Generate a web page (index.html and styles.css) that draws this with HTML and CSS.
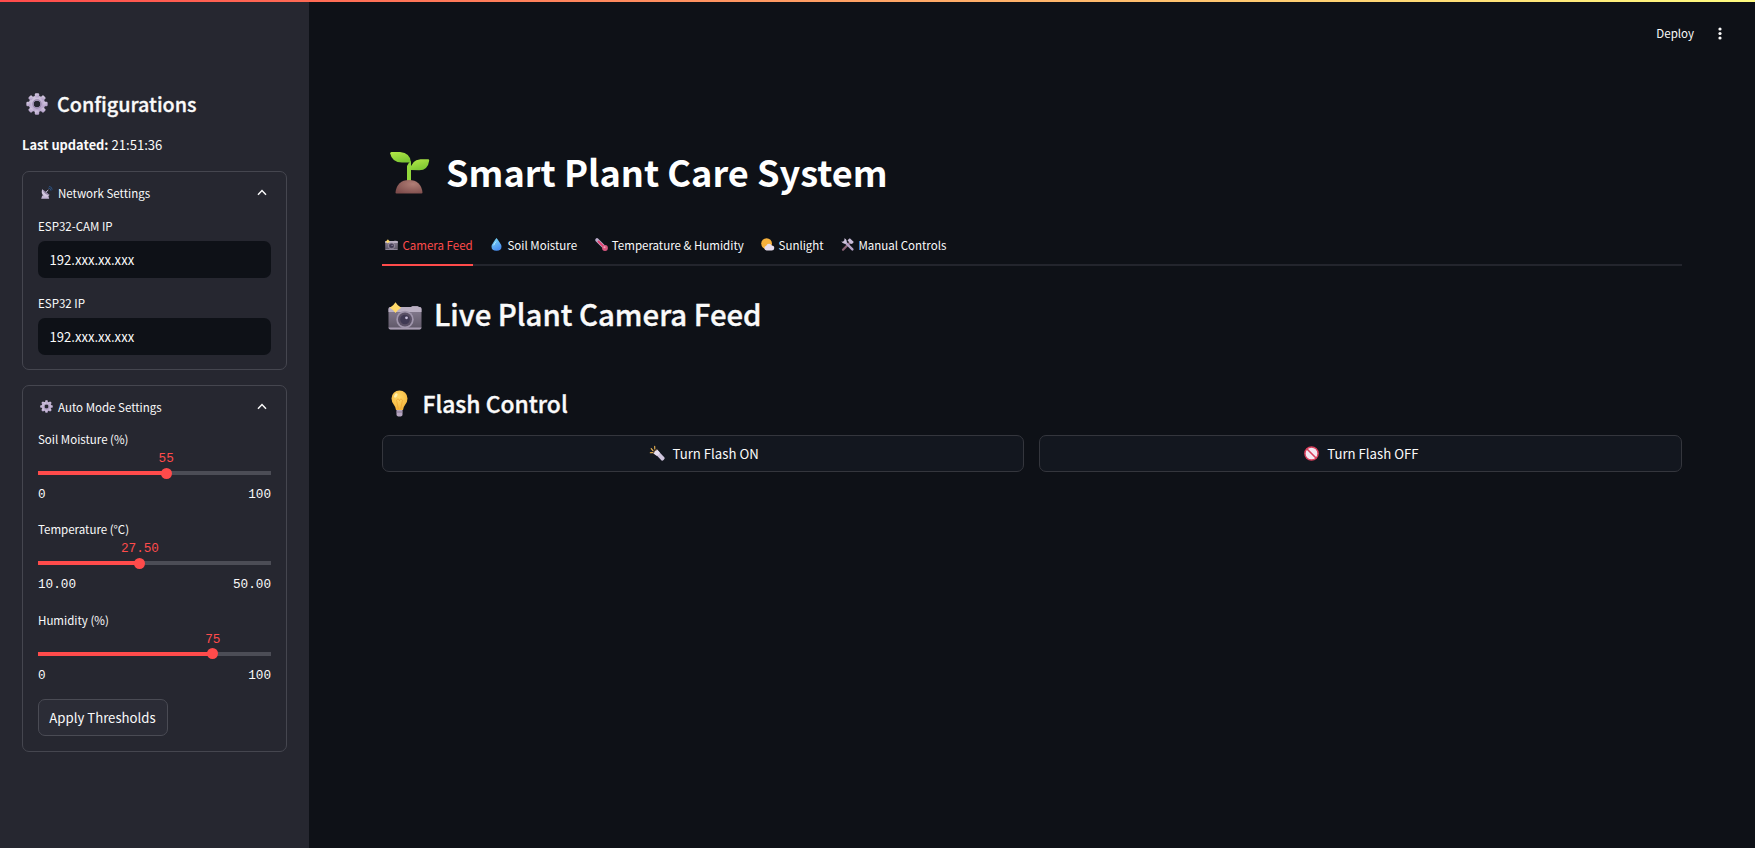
FILE: index.html
```html
<!DOCTYPE html>
<html lang="en">
<head>
<meta charset="utf-8">
<title>Smart Plant Care System</title>
<link rel="stylesheet" href="styles.css">
</head>
<body>
<svg class="defs" aria-hidden="true">
  <defs>
    <linearGradient id="metal" x1="0" y1="0" x2="0.6" y2="1"><stop offset="0" stop-color="#d8cfe4"/><stop offset="1" stop-color="#b3a0c8"/></linearGradient>
    <linearGradient id="leaf" x1="0" y1="0" x2="0.5" y2="1"><stop offset="0" stop-color="#b5e948"/><stop offset="1" stop-color="#7cc733"/></linearGradient>
    <radialGradient id="soil" cx="0.65" cy="0.3" r="0.8"><stop offset="0" stop-color="#b07e76"/><stop offset="1" stop-color="#7d4c4b"/></radialGradient>
    <linearGradient id="body" x1="0" y1="0" x2="0" y2="1"><stop offset="0" stop-color="#8a8094"/><stop offset="1" stop-color="#5d5666"/></linearGradient>
    <radialGradient id="glow" cx="0.45" cy="0.35" r="0.65"><stop offset="0" stop-color="#ffd867"/><stop offset="1" stop-color="#f5b53c"/></radialGradient>
    <linearGradient id="water" x1="0" y1="0" x2="0.4" y2="1"><stop offset="0" stop-color="#7fe0f8"/><stop offset="1" stop-color="#4a8ff0"/></linearGradient>
    <symbol id="gear" viewBox="0 0 24 24">
      <g fill="url(#metal)">
        <path fill-rule="evenodd" d="M12 3a9 9 0 1 0 0 18a9 9 0 0 0 0-18zm0 5.4a3.6 3.6 0 1 1 0 7.200a3.600 3.600 0 0 1 0-7.200z"/>
        <g id="teeth"><rect x="9.600" y="0.400" width="4.800" height="4.500" rx="1.300"/><rect x="9.600" y="19.100" width="4.800" height="4.500" rx="1.300"/><rect x="0.400" y="9.600" width="4.500" height="4.800" rx="1.300"/><rect x="19.100" y="9.600" width="4.500" height="4.800" rx="1.300"/></g>
        <use href="#teeth" transform="rotate(45 12 12)"/>
      </g>
      <circle cx="12" cy="12" r="4.400" fill="none" stroke="#9485a8" stroke-width="1.300"/>
    </symbol>
    <symbol id="camera" viewBox="0 0 34 28">
      <rect x="23" y="4" width="8" height="4" rx="1.500" fill="#aaa0b4"/>
      <rect x="0.500" y="5" width="33" height="22.500" rx="2" fill="url(#body)"/>
      <path d="M0.500 10V7q0-2 2-2h29q2 0 2 2v3z" fill="#b9afc2"/>
      <path d="M0.500 25.500h33q0 2-2 2h-29q-2 0-2-2z" fill="#a79cb1"/>
      <circle cx="17" cy="17.500" r="8.700" fill="#a096ac"/>
      <circle cx="17" cy="17.500" r="7" fill="#5a5166"/>
      <circle cx="17" cy="17.500" r="4.800" fill="#403a54"/>
      <circle cx="18.500" cy="15.800" r="1.400" fill="#c8bfdb"/>
      <path d="M7.500 0.300q2 3.500 5.700 5.400q-3.700 1.900-5.700 5.400q-2-3.500-5.700-5.400q3.700-1.900 5.700-5.400z" fill="#ffd96a"/>
    </symbol>
  </defs>
</svg>

<div class="topline"></div>
<div class="app">
  <aside class="sidebar">
    <h2 class="side-title"><svg class="i-gear-lg"><use href="#gear"/></svg><span>Configurations</span></h2>
    <p class="updated"><strong>Last updated:</strong> <span>21:51:36</span></p>

    <section class="panel panel-net">
      <header class="summary">
        <svg class="i-sm" viewBox="0 0 13 13"><path d="M1.200 12.700l1-3.200h6l1 3.200z" fill="#c2b5d2"/><path d="M2.200 3.300q-1.500 4.200 1.500 6.600q3 2 5.800-.8z" fill="#d2c8df"/><path d="M2.200 3.300l7.300 5.800q-4.500.4-7.300-5.800z" fill="#8d7f9f"/><path d="M6 6.200L8.300 4" stroke="#d2c8df"/><path d="M8.300 2q2.500 0 2.700 2.700M9 .4q3 .2 3.200 3.300" fill="none" stroke="#2b5080" stroke-width="1"/></svg>
        <span>Network Settings</span>
        <svg class="chev" viewBox="0 0 10 7"><path d="M1 5.700L5 1.600L9 5.700"/></svg>
      </header>
      <div class="fields">
        <label class="label">ESP32-CAM IP</label>
        <div class="input">192.xxx.xx.xxx</div>
        <label class="label second">ESP32 IP</label>
        <div class="input">192.xxx.xx.xxx</div>
      </div>
    </section>

    <section class="panel panel-auto">
      <header class="summary">
        <svg class="i-sm"><use href="#gear"/></svg>
        <span>Auto Mode Settings</span>
        <svg class="chev" viewBox="0 0 10 7"><path d="M1 5.700L5 1.600L9 5.700"/></svg>
      </header>
      <div class="sliders">
        <div class="slider" style="--v:55%"><label class="label">Soil Moisture (%)</label><div class="value"><b>55</b></div><div class="track"><i></i></div><div class="range"><span>0</span><span>100</span></div></div>
        <div class="slider" style="--v:43.75%"><label class="label">Temperature (°C)</label><div class="value"><b>27.50</b></div><div class="track"><i></i></div><div class="range"><span>10.00</span><span>50.00</span></div></div>
        <div class="slider" style="--v:75%"><label class="label">Humidity (%)</label><div class="value"><b>75</b></div><div class="track"><i></i></div><div class="range"><span>0</span><span>100</span></div></div>
      </div>
      <button class="btn apply">Apply Thresholds</button>
    </section>
  </aside>

  <main class="main">
    <header class="toolbar"><span>Deploy</span><svg viewBox="0 0 4 13"><circle cx="2" cy="2" r="1.600"/><circle cx="2" cy="6.500" r="1.600"/><circle cx="2" cy="11" r="1.600"/></svg></header>
    <div class="content">
      <h1 class="title">
        <svg viewBox="0 0 40 42"><path d="M17 14q1-3 4-5v20h-4z" fill="#92d83c"/><path d="M0.200 1.500Q0 0 1.500 0H10q10.500 1 11 10.500H12Q2 10.500.2 1.500z" fill="url(#leaf)"/><path d="M20.500 18q.5-10 10-10.800H38q1.400 0 1.200 1.200q-1.200 9.800-10 9.800z" fill="url(#leaf)"/><path d="M5.500 40.500q1.500-12.500 13.500-12.500t13.500 12.500q0 1-1 1h-25q-1 0-1-1z" fill="url(#soil)"/></svg>
        <span>Smart Plant Care System</span>
      </h1>

      <nav class="tabs">
        <a class="tab active"><svg><use href="#camera"/></svg><span>Camera Feed</span></a>
        <a class="tab"><svg viewBox="0 0 13 13"><path d="M6.500 0q1 1.200 2.700 3.800Q11.500 7 11.500 8.500q0 4.300-5 4.300t-5-4.300Q1.500 7 3.800 3.800Q5.500 1.200 6.500 0z" fill="url(#water)"/><path d="M3.700 7.300Q4.500 5 6 3.600" stroke="#b6f0ff" stroke-width="1" fill="none"/></svg><span>Soil Moisture</span></a>
        <a class="tab"><svg viewBox="0 0 13 13"><path d="M2 2L9.800 9.800" stroke="#b9abca" stroke-width="3.600" stroke-linecap="round"/><path d="M3.500 3.500L9.800 9.800" stroke="#e4406f" stroke-width="1.900" stroke-linecap="round"/><circle cx="10" cy="10" r="2.900" fill="#d7567f"/><circle cx="9.500" cy="9.300" r="1" fill="#f6a6b9"/></svg><span>Temperature &amp; Humidity</span></a>
        <a class="tab"><svg viewBox="0 0 13 13"><circle cx="5.600" cy="5.600" r="5.400" fill="#f6b13d"/><path d="M5.500 12.600a2.500 2.500 0 0 1-.3-4.900a3.100 3.100 0 0 1 5.600-.3a2.600 2.600 0 0 1-.3 5.200z" fill="#e6ddee"/></svg><span>Sunlight</span></a>
        <a class="tab"><svg viewBox="0 0 13 13"><path d="M9.600 4L2 11.800" stroke="#8c6377" stroke-width="2.200" stroke-linecap="round"/><path d="M3.600 3.600L11.400 11.400" stroke="#b5a5c8" stroke-width="2.400" stroke-linecap="round"/><path d="M3.300.2Q6.500 1.500 5.500 5Q2.500 6.800.2 3.500l2 .2l1.300-1.300z" fill="#cfc4dc"/><path d="M6.500 2.200L8.800.2l4 3.800l-1.800 2l-1.800-.4z" fill="#c9bcd8"/></svg><span>Manual Controls</span></a>
      </nav>

      <h2 class="heading"><svg><use href="#camera"/></svg><span>Live Plant Camera Feed</span></h2>

      <h3 class="subheading">
        <svg viewBox="0 0 17 27"><path d="M5.500 19h6v5.500q0 2-3 2t-3-2z" fill="#b5a5c0"/><path d="M5.500 21.500h6v1h-6z" fill="#857590"/><path d="M8.500.5a8 8 0 0 1 8 8q0 3.500-2.500 6.500q-1.800 2.200-2 5h-7q-.2-2.800-2-5Q.5 12 .5 8.500a8 8 0 0 1 8-8z" fill="url(#glow)"/><path d="M7.300 19L5.800 11.500a1.500 1.500 0 1 1 2.700-.7a1.500 1.500 0 1 1 2.700.7L9.700 19" fill="none" stroke="#eda02f" stroke-width=".7"/><ellipse cx="4.800" cy="5.500" rx="1.500" ry="2.300" transform="rotate(35 4.800 5.500)" fill="#fff0ac"/></svg>
        <span>Flash Control</span>
      </h3>

      <div class="actions">
        <button class="btn">
          <svg viewBox="0 0 15 15"><path d="M4.200 7.200L7.300 4.200L10 6.800L14.500 11.600q.7.900-.7 2.200t-2.200.7L7 9.800z" fill="#cfc4dc"/><path d="M3.400 7.600q.3-2.800 3.800-4.200l2.700 3.100q-.8 2.500-3.300 3.300z" fill="#e6deee"/><path d="M3.400 7.600q.2-2.900 3.800-4.200" stroke="#8a6b4a" fill="none"/><path d="M3 4.600L1.200 2.600M4.800 3L4.700.4M2.500 6.600L.3 6.700" stroke="#f4bb55" stroke-width="1.100" stroke-linecap="round"/></svg>
          <span>Turn Flash ON</span>
        </button>
        <button class="btn">
          <svg viewBox="0 0 15 15"><circle cx="7.500" cy="7.500" r="6.600" fill="#f3e6f1" stroke="#d9405c" stroke-width="1.500"/><path d="M3 3L12 12" stroke="#d9405c" stroke-width="1.600"/></svg>
          <span>Turn Flash OFF</span>
        </button>
      </div>
    </div>
  </main>
</div>
</body>
</html>
```
FILE: styles.css
```css
* { box-sizing: border-box; }
body {
  margin: 0;
  height: 848px;
  overflow: hidden;
  background: #0e1117;
  color: #fafafa;
  font-family: "Noto Sans CJK JP", "Noto Sans", sans-serif;
  font-size: 11.52px;
}
h1, h2, h3, p { margin: 0; }
svg { display: block; flex: none; overflow: visible; }
.defs { position: absolute; width: 0; height: 0; }
.topline {
  height: 2px;
  background: linear-gradient(90deg, #ff4b4b, #fffd80);
}
.app { display: flex; height: 846px; }

/* Sidebar */
.sidebar {
  width: 309px;
  flex: none;
  padding: 81px 22px 0;
  background: #262730;
}
.side-title {
  display: flex;
  align-items: center;
  gap: 9px;
  height: 40px;
  padding-left: 4px;
  font-size: 19.8px;
  font-weight: 500;
  -webkit-text-stroke: 0.3px #fafafa;
}
.i-gear-lg { width: 22px; height: 22px; margin-top: 2px; }
.updated { margin-top: 12px; line-height: 20px; font-size: 13.1px; }
.updated strong { font-weight: 700; font-size: 12.85px; }
.panel {
  width: 265px;
  border: 1px solid #45464f;
  border-radius: 7px;
  padding: 0 15px;
}
.panel-net { margin-top: 16px; height: 199px; }
.panel-auto { margin-top: 15px; height: 367px; }
.summary {
  display: flex;
  align-items: center;
  height: 41px;
  padding: 0 4px 0 2px;
}
.summary span { margin-left: 5px; flex: 1; }
.i-sm { width: 13px; height: 13px; }
.chev { width: 10px; height: 7px; margin-bottom: 1px; }
.chev path { fill: none; stroke: #fafafa; stroke-width: 1.5; }
.label { display: block; height: 20px; line-height: 20px; }
.fields { padding-top: 3px; }
.input {
  height: 36.5px;
  margin-top: 5px;
  padding-left: 11.5px;
  border-radius: 7px;
  background: #0e1117;
  font-size: 13.1px;
  line-height: 38px;
}
.second { margin-top: 15.5px; }
.sliders { padding-top: 2px; }
.slider { height: 90.4px; }
.value, .range {
  font-family: "Liberation Mono", monospace;
  font-size: 12.7px;
}
.value { height: 18px; line-height: 19px; }
.value b {
  display: block;
  width: max-content;
  margin-left: var(--v);
  transform: translateX(-50%);
  font-weight: 400;
  color: #ff4b4b;
}
.track {
  display: flex;
  align-items: center;
  height: 12px;
  background: linear-gradient(90deg, #ff4b4b var(--v), #4c4d56 var(--v)) center / 100% 4px no-repeat;
}
.track i {
  width: 11px;
  height: 11px;
  margin-left: calc(var(--v) - 5.5px);
  border-radius: 50%;
  background: #ff4b4b;
}
.range {
  display: flex;
  justify-content: space-between;
  height: 20px;
  margin-top: 6px;
  line-height: 20px;
}
.btn {
  display: flex;
  align-items: center;
  justify-content: center;
  height: 37px;
  padding: 0 0 0 2px;
  border: 1px solid #34363d;
  border-radius: 7px;
  background: #13171f;
  color: #fafafa;
  font: inherit;
  font-size: 13.2px;
}
.apply {
  width: 130px;
  margin-top: -1px;
  padding: 0 1px 0 0;
  background: #2b2c36;
  border-color: #4a4b54;
}

/* Main area */
.main { flex: 1; }
.toolbar {
  display: flex;
  align-items: center;
  justify-content: flex-end;
  gap: 24px;
  height: 61px;
  padding-right: 33px;
}
.toolbar svg { width: 4px; height: 13px; fill: #fafafa; margin-top: 1px; }
.content { padding: 76px 73.5px 0 73px; }
.title {
  display: flex;
  align-items: center;
  height: 64px;
  padding-left: 8px;
  font-size: 36.15px;
  font-weight: 700;
  color: #fff;
}
.title svg { width: 40px; height: 42px; margin-top: 3px; }
.title span { margin-left: 16px; }
.tabs {
  display: flex;
  height: 38px;
  margin-top: 25px;
  border-bottom: 2px solid #23252d;
}
.tab {
  display: flex;
  align-items: center;
  height: 38px;
  margin-right: 14.6px;
  padding: 0 0 5px 3px;
}
.tab svg { width: 13px; height: 13px; margin-right: 4.2px; }
.active {
  padding-bottom: 3px;
  border-bottom: 2px solid #ff4b4b;
  color: #ff4b4b;
}
.active svg { margin-right: 4.5px; }
.heading {
  display: flex;
  align-items: center;
  gap: 12px;
  height: 48px;
  margin-top: 23px;
  padding-left: 6px;
  font-size: 29.35px;
  font-weight: 500;
  -webkit-text-stroke: 0.4px #fafafa;
}
.heading svg { width: 34px; height: 28px; margin-top: 6px; }
.subheading {
  display: flex;
  align-items: center;
  height: 40px;
  margin-top: 46px;
  padding-left: 9px;
  font-size: 22.85px;
  font-weight: 500;
  -webkit-text-stroke: 0.35px #fafafa;
}
.subheading svg { width: 17px; height: 27px; }
.subheading span { margin-left: 14.5px; }
.actions {
  display: grid;
  grid-template-columns: 1fr 1fr;
  gap: 15px;
  margin-top: 12px;
}
.actions svg { width: 15px; height: 15px; margin-right: 8px; }
```
